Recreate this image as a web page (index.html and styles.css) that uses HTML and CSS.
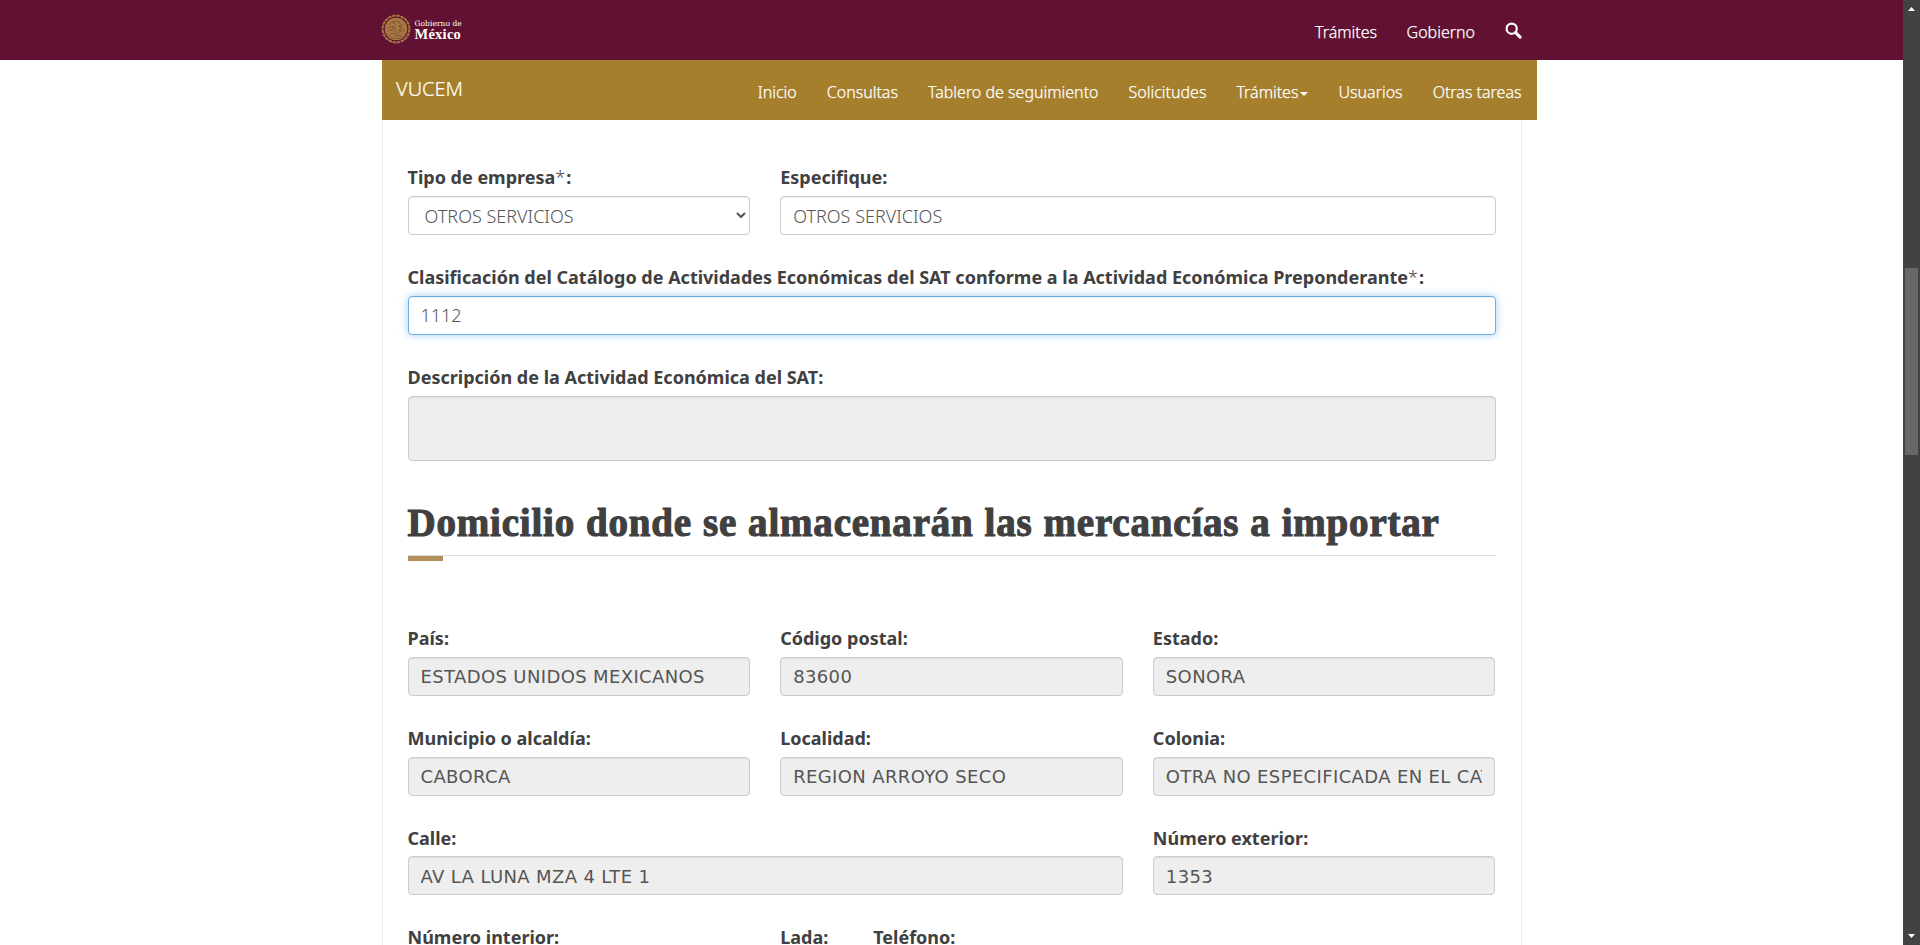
FILE: index.html
```html
<!DOCTYPE html>
<html lang="es">
<head>
<meta charset="utf-8">
<title>VUCEM</title>
<link rel="stylesheet" href="styles.css">
</head>
<body>
<div class="page">
  <header class="gov">
    <div class="gov-inner">
      <a class="brand">
        <svg class="seal" viewBox="0 0 30 30" width="30" height="30">
          <circle cx="15" cy="15" r="13.400" fill="none" stroke="#a5793f" stroke-width="2" stroke-dasharray="3.500 .7"/>
          <circle cx="15" cy="15" r="11.200" fill="#a5793f"/>
          <g fill="none" stroke="#7d4234" stroke-width=".7" stroke-linecap="round">
            <path d="M8 11c3-4 7-5 11-2l2 3-3-.5c2 3 2 6-1 8"/>
            <path d="M7 14c3-2 6-2 8 1M7 17c3-2 6-1 8 1M9 20c3-1 6-1 8 1M12 8l3 4M17 16l5 2M14 22l6-1"/>
            <path d="M6 20c4 6 14 6 18 0"/>
            <path d="M20 13c2 1 3 2 3 4M11 12l2 3"/>
          </g>
        </svg>
        <span class="brand-text">
          <span class="brand-small">Gobierno de</span>
          <span class="brand-big">México</span>
        </span>
      </a>
      <nav class="gov-nav">
        <a>Trámites</a>
        <a>Gobierno</a>
        <svg class="search" viewBox="0 0 17 17" width="17" height="17">
          <circle cx="6.700" cy="6.700" r="5.100" fill="none" stroke="#fff" stroke-width="2.200"/>
          <path d="M10.600 10.600l4.500 4.500" stroke="#fff" stroke-width="3" stroke-linecap="round"/>
        </svg>
      </nav>
    </div>
  </header>

  <div class="sub">
    <a class="sub-brand">VUCEM</a>
    <nav class="sub-nav">
      <a>Inicio</a>
      <a>Consultas</a>
      <a>Tablero de seguimiento</a>
      <a>Solicitudes</a>
      <a>Trámites<i class="caret"></i></a>
      <a>Usuarios</a>
      <a>Otras tareas</a>
    </nav>
  </div>

  <main class="form">
    <div class="row">
      <div class="field">
        <label>Tipo de empresa<span class="req">*</span>:</label>
        <select class="control"><option>OTROS SERVICIOS</option></select>
      </div>
      <div class="field span-2">
        <label>Especifique:</label>
        <input class="control" value="OTROS SERVICIOS">
      </div>
    </div>
    <div class="row">
      <div class="field span-3">
        <label>Clasificación del Catálogo de Actividades Económicas del SAT conforme a la Actividad Económica Preponderante<span class="req">*</span>:</label>
        <input class="control active" value="1112">
      </div>
    </div>
    <div class="row">
      <div class="field span-3">
        <label>Descripción de la Actividad Económica del SAT:</label>
        <div class="control locked area"></div>
      </div>
    </div>

    <h3 class="title">Domicilio donde se almacenarán las mercancías a importar</h3>
    <div class="rule"></div>

    <div class="row">
      <div class="field">
        <label>País:</label>
        <input class="control locked" readonly value="ESTADOS UNIDOS MEXICANOS">
      </div>
      <div class="field">
        <label>Código postal:</label>
        <input class="control locked" readonly value="83600">
      </div>
      <div class="field">
        <label>Estado:</label>
        <input class="control locked" readonly value="SONORA">
      </div>
    </div>
    <div class="row">
      <div class="field">
        <label>Municipio o alcaldía:</label>
        <input class="control locked" readonly value="CABORCA">
      </div>
      <div class="field">
        <label>Localidad:</label>
        <input class="control locked" readonly value="REGION ARROYO SECO">
      </div>
      <div class="field">
        <label>Colonia:</label>
        <input class="control locked" readonly value="OTRA NO ESPECIFICADA EN EL CATALOGO">
      </div>
    </div>
    <div class="row tight">
      <div class="field span-2">
        <label>Calle:</label>
        <input class="control locked" readonly value="AV LA LUNA MZA 4 LTE 1">
      </div>
      <div class="field">
        <label>Número exterior:</label>
        <input class="control locked" readonly value="1353">
      </div>
    </div>
    <div class="row">
      <div class="field">
        <label>Número interior:</label>
        <input class="control locked" readonly>
      </div>
      <div class="field phone">
        <div class="lada">
          <label>Lada:</label>
          <input class="control locked" readonly>
        </div>
        <div class="tel">
          <label>Teléfono:</label>
          <input class="control locked" readonly>
        </div>
      </div>
    </div>
  </main>
</div>

<div class="scrollbar">
  <svg viewBox="0 0 17 17" width="17" height="17"><path d="M5 11h7L8.500 7z" fill="#fff"/></svg>
  <div class="track"><div class="thumb"></div></div>
  <svg viewBox="0 0 17 17" width="17" height="17"><path d="M5 6h7L8.500 10z" fill="#fff"/></svg>
</div>
</body>
</html>
```
FILE: styles.css
```css
* { box-sizing: border-box; }
body {
  margin: 0;
  height: 945px;
  display: flex;
  overflow: hidden;
  background: #fff;
  color: #404041;
  font: 300 18px/26px "Noto Sans", sans-serif;
}
.page { flex: 1; height: 945px; overflow: hidden; }

.gov { height: 60px; background: #611232; }
.gov-inner {
  width: 1140px;
  height: 60px;
  margin: 0 auto;
  display: flex;
  justify-content: space-between;
}
.brand { display: flex; padding-top: 14px; gap: 4px; margin-left: -1px; }
.brand-text { display: flex; flex-direction: column; color: #fff; padding-top: 6px; }
.brand-small {
  font: 400 7.500px/8px "DejaVu Serif", serif;
  letter-spacing: .05px;
  white-space: nowrap;
}
.brand-big {
  font: 700 14.500px/13px "Liberation Serif", serif;
  letter-spacing: .25px;
}
.gov-nav, .sub-nav {
  display: flex;
  gap: 30px;
  padding-top: 19px;
  color: #fff;
  font-size: 16px;
  -webkit-text-stroke: .25px #fff;
}
.gov-nav { gap: 29.500px; }
.search { margin-top: 3px; }

.sub {
  width: 1155px;
  height: 60px;
  margin-left: 382px;
  padding: 0 15.500px 0 14px;
  display: flex;
  justify-content: space-between;
  background: #a57f2c;
  color: #fff;
}
.sub-brand { padding-top: 16px; font-size: 20px; -webkit-text-stroke: .2px #fff; }
.caret {
  display: inline-block;
  margin-left: 2px;
  vertical-align: middle;
  border: 4px solid transparent;
  border-top-color: #fff;
  border-bottom: 0;
}

.form {
  width: 1140px;
  height: 825px;
  margin: 0 auto;
  padding: 44px 25px 0;
  border: solid #eee;
  border-width: 0 1px;
}
.row {
  display: grid;
  grid-template-columns: repeat(3, 1fr);
  column-gap: 30px;
  margin-bottom: 29px;
}
.span-2 { grid-column: span 2; }
.span-3 { grid-column: span 3; }
label {
  display: block;
  height: 26px;
  margin-bottom: 6px;
  font-weight: 700;
  white-space: nowrap;
}
.tight label { margin-bottom: 5px; }
.tight .control { padding-top: 2px; }
.req { font-weight: 300; margin-right: 1px; }
.control {
  display: block;
  width: 100%;
  height: 39px;
  margin: 0;
  padding: 0 12px;
  border: 1px solid #ccc;
  border-radius: 4px;
  outline: 0;
  background: #fff;
  box-shadow: inset 0 1px 1px rgba(0, 0, 0, .075);
  color: #555;
  font: 300 18px/26px "Noto Sans", sans-serif;
}
.active {
  padding-bottom: 2px;
  border-color: #66afe9;
  box-shadow: inset 0 1px 1px rgba(0, 0, 0, .075), 0 0 8px rgba(102, 175, 233, .6);
}
.locked {
  background: #eee;
  font: 400 18px/26px "DejaVu Sans", sans-serif;
  letter-spacing: .37px;
}
.area { height: 65px; }

.title {
  height: 65px;
  margin: 0;
  padding-top: 10px;
  font: 700 39px/46px "Liberation Serif", serif;
  letter-spacing: .8px;
  word-spacing: .5px;
  white-space: nowrap;
  -webkit-text-stroke: 1.100px #404041;
}
.rule { height: 70px; border-top: 1px solid #ddd; }
.rule::before {
  content: "";
  display: block;
  width: 35px;
  height: 5px;
  background: #b38e5d;
}
.phone { display: grid; grid-template-columns: 63px 1fr; column-gap: 30px; }

.scrollbar {
  width: 17px;
  height: 945px;
  display: flex;
  flex-direction: column;
  background: #424242;
}
.scrollbar svg { display: block; flex: none; }
.track { flex: 1; padding: 251px 2px 0; }
.thumb { height: 187px; background: #686868; }
```
